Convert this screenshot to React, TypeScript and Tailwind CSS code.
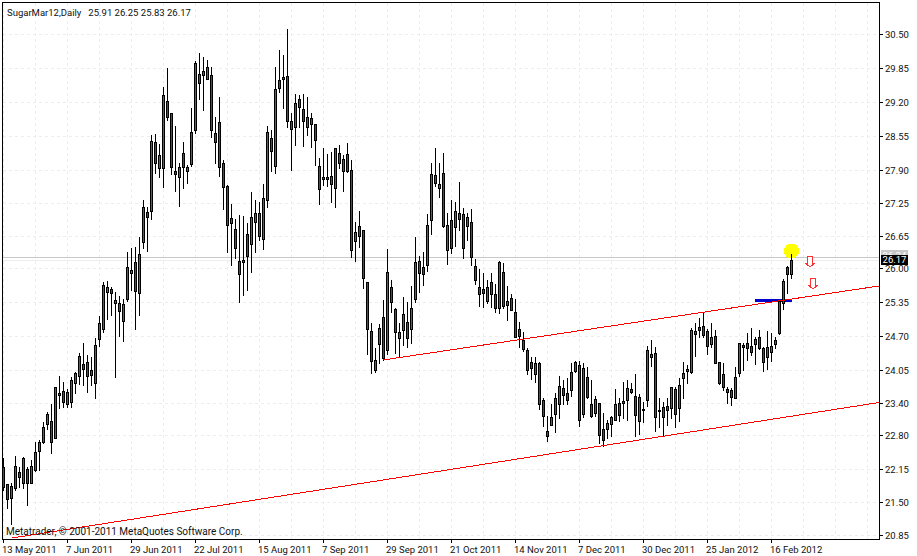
import React from "react";

// [high, bodyTop, bodyBottom, low, up] in page pixels, one bar every 4px from x=3
const bars: [number, number, number, number, number][] = [
	[458, 467, 487, 490, 0], [484, 484, 499, 508, 0], [483, 486, 498, 524, 1], [456, 466, 488, 490, 1],
	[467, 472, 477, 487, 0], [457, 458, 483, 488, 1], [467, 469, 483, 505, 0], [460, 466, 483, 483, 1],
	[442, 452, 470, 471, 1], [440, 442, 451, 470, 1], [422, 427, 442, 443, 1], [412, 414, 424, 429, 1],
	[404, 421, 442, 453, 0], [387, 387, 438, 438, 1], [376, 393, 395, 408, 1], [382, 391, 402, 407, 0],
	[389, 392, 404, 407, 1], [377, 380, 402, 407, 1], [372, 373, 383, 393, 1], [353, 356, 376, 384, 1],
	[343, 364, 369, 385, 0], [355, 362, 376, 392, 0], [357, 370, 375, 385, 0], [338, 345, 383, 398, 1],
	[316, 323, 339, 346, 1], [282, 285, 329, 332, 1], [281, 287, 292, 319, 1], [287, 289, 293, 315, 0],
	[292, 300, 303, 377, 1], [296, 303, 311, 336, 0], [299, 304, 321, 341, 1], [252, 267, 299, 301, 1],
	[248, 270, 273, 290, 1], [247, 262, 291, 329, 0], [237, 254, 293, 315, 1], [200, 207, 242, 248, 1],
	[207, 212, 217, 251, 0], [135, 141, 211, 219, 1], [134, 142, 163, 173, 0], [144, 155, 168, 177, 1],
	[87, 95, 168, 187, 1], [68, 101, 117, 120, 0], [113, 113, 167, 174, 0], [126, 171, 174, 191, 0],
	[163, 167, 177, 206, 1], [142, 153, 167, 188, 0], [165, 167, 171, 183, 1], [108, 132, 164, 166, 1],
	[61, 63, 130, 133, 1], [53, 74, 83, 99, 0], [57, 71, 75, 110, 1], [60, 67, 79, 79, 1],
	[67, 75, 130, 137, 0], [117, 133, 142, 163, 0], [97, 122, 167, 176, 0], [160, 163, 187, 209, 0],
	[185, 186, 225, 252, 0], [204, 218, 223, 265, 1], [219, 229, 248, 258, 0], [215, 261, 274, 302, 0],
	[216, 260, 262, 295, 1], [223, 234, 256, 290, 0], [192, 217, 244, 272, 1], [200, 213, 222, 252, 1],
	[202, 213, 236, 240, 0], [184, 198, 239, 249, 1], [126, 132, 200, 207, 1], [130, 138, 151, 171, 0],
	[67, 89, 166, 173, 1], [50, 80, 88, 92, 0], [55, 77, 79, 108, 1], [29, 76, 121, 127, 0],
	[113, 121, 129, 170, 0], [94, 103, 127, 145, 1], [95, 99, 107, 127, 0], [94, 109, 121, 146, 0],
	[97, 117, 127, 135, 1], [113, 118, 124, 147, 0], [124, 124, 140, 165, 0], [158, 166, 189, 204, 0],
	[148, 177, 179, 185, 1], [154, 177, 179, 186, 1], [152, 176, 184, 202, 0], [148, 148, 188, 207, 1],
	[145, 153, 163, 168, 0], [155, 159, 171, 191, 1], [143, 154, 171, 172, 0], [160, 170, 250, 257, 0],
	[222, 232, 241, 261, 1], [211, 226, 236, 247, 0], [230, 230, 278, 288, 0], [282, 282, 329, 354, 0],
	[323, 331, 361, 373, 0], [348, 360, 370, 372, 1], [324, 328, 344, 363, 1], [300, 317, 358, 360, 0],
	[249, 272, 350, 354, 1], [280, 287, 302, 312, 0], [308, 309, 332, 353, 0], [323, 332, 338, 357, 1],
	[297, 314, 330, 345, 1], [302, 322, 338, 347, 0], [286, 308, 329, 343, 1], [237, 262, 299, 302, 1],
	[256, 261, 273, 292, 0], [252, 267, 274, 285, 0], [214, 225, 265, 271, 1], [163, 174, 220, 234, 1],
	[148, 175, 183, 186, 0], [163, 184, 188, 197, 1], [153, 173, 226, 227, 0], [213, 225, 250, 264, 1],
	[200, 220, 248, 253, 0], [202, 211, 227, 246, 1], [182, 213, 219, 230, 0], [208, 214, 248, 258, 0],
	[213, 217, 226, 240, 1], [209, 222, 257, 265, 0], [259, 266, 280, 284, 0], [269, 287, 294, 306, 0],
	[273, 289, 293, 307, 0], [280, 287, 301, 303, 1], [273, 282, 294, 307, 0], [284, 294, 308, 312, 0],
	[261, 262, 308, 313, 1], [263, 272, 306, 308, 0], [286, 301, 305, 320, 1], [294, 298, 310, 310, 0],
	[299, 312, 337, 337, 0], [322, 329, 336, 347, 0], [332, 340, 349, 351, 0], [348, 350, 370, 374, 0],
	[357, 362, 368, 379, 0], [357, 363, 374, 382, 1], [362, 363, 404, 409, 0], [398, 400, 416, 426, 0],
	[416, 431, 436, 441, 0], [404, 417, 425, 425, 1], [393, 398, 414, 432, 1], [376, 386, 404, 418, 1],
	[380, 388, 395, 404, 0], [378, 393, 400, 404, 0], [363, 372, 390, 396, 1], [361, 362, 371, 372, 1],
	[361, 365, 420, 426, 0], [363, 368, 414, 417, 1], [367, 377, 397, 398, 0], [380, 404, 416, 417, 0],
	[396, 399, 413, 416, 1], [403, 403, 435, 443, 0], [413, 429, 440, 446, 0], [420, 423, 429, 438, 1],
	[416, 417, 424, 436, 1], [389, 404, 420, 420, 1], [398, 403, 415, 421, 0], [382, 401, 403, 418, 1],
	[380, 388, 400, 420, 1], [383, 389, 392, 393, 0], [374, 396, 415, 436, 0], [394, 397, 421, 434, 1],
	[402, 409, 410, 422, 1], [346, 350, 400, 406, 1], [340, 354, 357, 366, 1], [347, 353, 417, 431, 0],
	[398, 410, 411, 427, 1], [402, 407, 417, 436, 0], [398, 406, 410, 425, 0], [387, 387, 408, 418, 1],
	[387, 389, 414, 427, 0], [378, 385, 408, 421, 1], [362, 373, 378, 398, 1], [365, 369, 371, 383, 1],
	[328, 330, 372, 373, 1], [323, 331, 334, 356, 1], [318, 327, 330, 337, 0], [312, 326, 335, 337, 0],
	[329, 331, 346, 354, 0], [323, 337, 344, 347, 1], [330, 336, 363, 363, 0], [362, 362, 383, 384, 0],
	[363, 374, 387, 390, 0], [387, 389, 392, 403, 0], [388, 390, 397, 405, 0], [367, 377, 398, 398, 1],
	[343, 343, 373, 376, 1], [343, 345, 347, 370, 0], [333, 343, 348, 360, 0], [328, 346, 352, 355, 0],
	[337, 339, 344, 364, 1], [330, 337, 348, 349, 0], [347, 348, 362, 371, 0], [331, 347, 357, 369, 1],
	[333, 346, 352, 361, 1], [337, 340, 344, 348, 1], [300, 301, 333, 334, 1], [279, 281, 303, 309, 1],
	[266, 267, 274, 293, 0], [254, 260, 274, 278, 1],
];

const prices = [
	{ label: "30.50", rowClass: "h-[34px]" },
	{ label: "29.85", rowClass: "h-[34px]" },
	{ label: "29.20", rowClass: "h-[34px]" },
	{ label: "28.55", rowClass: "h-[34px]" },
	{ label: "27.90", rowClass: "h-[33px]" },
	{ label: "27.25", rowClass: "h-[33px]" },
	{ label: "26.65", rowClass: "h-[32px]" },
	{ label: "26.00", rowClass: "h-[34px]" },
	{ label: "25.35", rowClass: "h-[34px]" },
	{ label: "24.70", rowClass: "h-[34px]" },
	{ label: "24.05", rowClass: "h-[33px]" },
	{ label: "23.40", rowClass: "h-[32px]" },
	{ label: "22.80", rowClass: "h-[34px]" },
	{ label: "22.15", rowClass: "h-[33px]" },
	{ label: "21.50", rowClass: "h-[33px]" },
	{ label: "20.85", rowClass: "h-[13px]" },
];

const dates = [
	"13 May 2011", "7 Jun 2011", "29 Jun 2011", "22 Jul 2011", "15 Aug 2011", "7 Sep 2011", "29 Sep 2011",
	"21 Oct 2011", "14 Nov 2011", "7 Dec 2011", "30 Dec 2011", "25 Jan 2012", "16 Feb 2012",
];

const gridY = [34, 68, 102, 136, 170, 203, 236, 268, 302, 336, 370, 403, 435, 469, 502, 535];
const gridX = Array.from({ length: 28 }, (_, i) => 3 + i * 32);

const DownArrow = ({ x, y }: { x: number; y: number }) => (
	<path
		d={`M${x + 2} ${y}H${x + 7}V${y + 7}H${x + 10}L${x + 5} ${y + 11}L${x} ${y + 7}H${x + 2}Z`}
		fill="#fff"
		stroke="#ff3030"
	/>
);

const Chart = () => (
	<svg
		viewBox="3 3 876 536"
		shapeRendering="crispEdges"
		className="block w-[876px] h-[536px]"
	>
		{gridY.map((y) => (
			<line key={y} x1={3} x2={879} y1={y + 0.5} y2={y + 0.5} stroke="#ededed" strokeDasharray="3 3" />
		))}
		{gridX.map((x) => (
			<line key={x} x1={x + 0.5} x2={x + 0.5} y1={3} y2={539} stroke="#ededed" strokeDasharray="3 3" />
		))}

		<line x1={3} x2={879} y1={260.5} y2={260.5} stroke="#eeeeee" />
		<line x1={3} x2={879} y1={257} y2={257} stroke="#c8c8c8" />

		<circle cx={791.5} cy={251} r={7.5} fill="#ffff00" />
		<rect x={755} y={299} width={37} height={3} fill="#0000cc" />

		{bars.map(([high, top, bottom, low, up], i) => {
			const x = 3 + i * 4;
			return (
				<g key={i}>
					<rect x={x} y={high} width={1} height={low - high + 1} fill="#000" />
					<rect x={x - 1} y={top} width={3} height={bottom - top + 1} fill="#000" />
					{bottom - top > 1 && (
						<rect
							x={x}
							y={top + 1}
							width={1}
							height={bottom - top - 1}
							fill={up ? "#1f8a1f" : "#e01010"}
						/>
					)}
				</g>
			);
		})}

		{/* channel */}
		<line x1={383} y1={360} x2={879} y2={286} stroke="#ff0000" />
		<line x1={12} y1={538} x2={879} y2={402.5} stroke="#ff0000" />

		<DownArrow x={805} y={256} />
		<DownArrow x={808} y={278} />
	</svg>
);

export default function App() {
	return (
		<div className="w-[917px] h-[556px] overflow-hidden bg-white pl-[2px] pt-[2px] font-['Roboto',sans-serif] text-[10px] leading-none text-[#101010]">
			<div className="flex">
				<div className="relative box-content w-[876px] h-[536px] border border-black">
					<Chart />
					<div className="absolute left-[4px] top-[3px] flex gap-[7px] whitespace-pre text-[9.5px] leading-[13px]">
						<span>SugarMar12,Daily</span>
						<span>25.91 26.25 25.83 26.17</span>
					</div>
					<div className="absolute left-[3px] bottom-[1px] whitespace-pre leading-[13px]">
						Metatrader, © 2001-2011 MetaQuotes Software Corp.
					</div>
				</div>

				<div className="relative flex-1 flex flex-col pt-[24px] text-[9.5px]">
					{prices.map((p) => (
						<div key={p.label} className={`flex items-start gap-[2px] ${p.rowClass}`}>
							<span className="mt-[8px] w-[3px] h-px bg-black" />
							<span className="leading-[17px]">{p.label}</span>
						</div>
					))}
					<div className="absolute left-[1px] top-[248px] w-[27px] h-[12px] bg-[#c8c8c8] text-white text-center leading-[11px]">
						26.24
					</div>
					<div className="absolute left-[1px] top-[253px] w-[27px] h-[10px] bg-black text-white text-center leading-[10px]">
						26.17
					</div>
				</div>
			</div>

			<div className="flex pl-[1px] text-[9.5px]">
				{dates.map((d) => (
					<div key={d} className="w-[64px] shrink-0 flex flex-col">
						<span className="w-px h-[3px] bg-black" />
						<span className="mt-[1px] -ml-[1px] whitespace-nowrap leading-[11px]">{d}</span>
					</div>
				))}
			</div>
		</div>
	);
}
